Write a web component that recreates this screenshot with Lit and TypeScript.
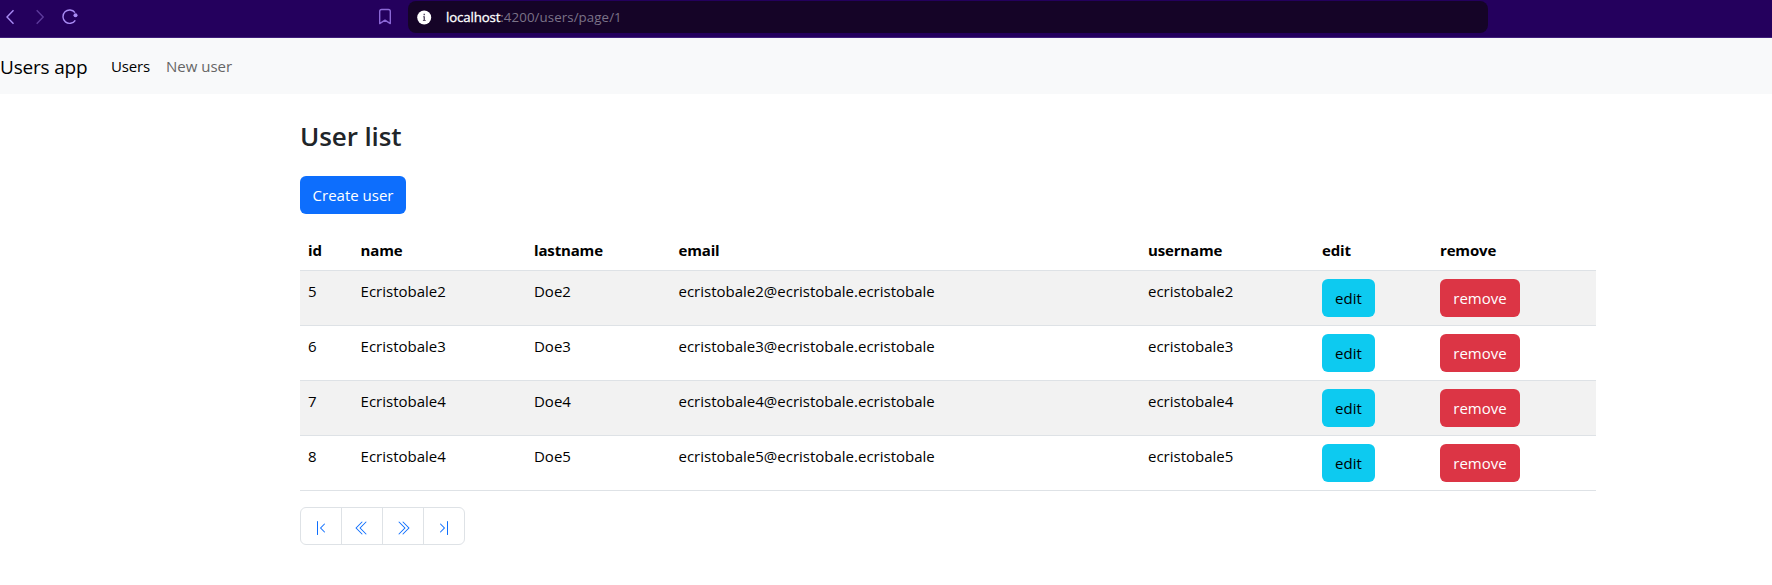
import { LitElement, html, css, svg } from "lit";
import { customElement, state } from "lit/decorators.js";

interface User {
  id: number;
  name: string;
  lastname: string;
  email: string;
  username: string;
}

@customElement("browser-bar")
class BrowserBar extends LitElement {
  static styles = css`
    :host {
      display: flex;
      box-sizing: border-box;
      height: 38px;
      background: #24005d;
      border-bottom: 1px solid #3f1f7a;
      font-family: "Segoe UI", "Open Sans", "Noto Sans", sans-serif;
    }
    .controls {
      display: flex;
      width: 408px;
      height: 33px;
    }
    .address {
      display: flex;
      align-items: center;
      box-sizing: border-box;
      width: 1080px;
      height: 32px;
      margin-top: 1px;
      padding-left: 9px;
      border-radius: 8px;
      background: #150427;
      color: #7b7388;
      font-size: 13.3px;
      line-height: 20px;
    }
    .address svg {
      margin-right: 14px;
    }
    .host {
      color: #fff;
      letter-spacing: -0.16px;
      -webkit-text-stroke: 0.3px #fff;
    }
    .path {
      letter-spacing: 0.08px;
    }
  `;
  render() {
    return html`
      <svg class="controls" width="408" height="33" viewBox="0 0 408 33" fill="none" stroke="#a98bf5" stroke-width="1.4">
        <path d="M13.5 10.3 7 17l6.500 6.700" />
        <path d="M36.700 10.300 43.200 17l-6.500 6.700" stroke="#5d3a9c" />
        <path d="M75.300 20.300A6.700 6.700 0 1 1 75 12.600" />
        <circle cx="75.500" cy="15.300" r="2" fill="#a98bf5" stroke="none" />
        <path d="M379.700 23.600V11.500a2 2 0 0 1 2-2h6.600a2 2 0 0 1 2 2v12.100l-5.300-3.500z" stroke="#8b68d6" stroke-linejoin="round" />
      </svg>
      <div class="address">
        <svg width="15" height="15" viewBox="0 0 15 15">
          <circle cx="7.200" cy="7.500" r="7" fill="#fff" />
          <path d="M6.500 3.700h1.500v1.500h-1.500zM6 6.300h2v3.700h.7v1H5.900v-1h.7V7.300H6z" fill="#5b5168" />
        </svg>
        <span class="host">localhost</span><span class="path">:4200/users/page/1</span>
      </div>
    `;
  }
}

const PAGE_ICONS = [
  {
    label: "First",
    shape: svg`<path d="M11.854 3.646a.5.5 0 0 1 0 .708L8.207 8l3.647 3.646a.5.5 0 0 1-.708.708l-4-4a.5.5 0 0 1 0-.708l4-4a.5.5 0 0 1 .708 0M4.500 1a.5.5 0 0 0-.5.5v13a.5.5 0 0 0 1 0v-13a.5.5 0 0 0-.5-.5"/>`,
  },
  {
    label: "Previous",
    shape: svg`<path d="M8.354 1.646a.5.5 0 0 1 0 .708L2.707 8l5.647 5.646a.5.5 0 0 1-.708.708l-6-6a.5.5 0 0 1 0-.708l6-6a.5.5 0 0 1 .708 0"/><path d="M12.354 1.646a.5.5 0 0 1 0 .708L6.707 8l5.647 5.646a.5.5 0 0 1-.708.708l-6-6a.5.5 0 0 1 0-.708l6-6a.5.5 0 0 1 .708 0"/>`,
  },
  {
    label: "Next",
    shape: svg`<path d="M3.646 1.646a.5.5 0 0 1 .708 0l6 6a.5.5 0 0 1 0 .708l-6 6a.5.5 0 0 1-.708-.708L9.293 8 3.646 2.354a.5.5 0 0 1 0-.708"/><path d="M7.646 1.646a.5.5 0 0 1 .708 0l6 6a.5.5 0 0 1 0 .708l-6 6a.5.5 0 0 1-.708-.708L13.293 8 7.646 2.354a.5.5 0 0 1 0-.708"/>`,
  },
  {
    label: "Last",
    shape: svg`<path d="M4.146 3.646a.5.5 0 0 0 0 .708L7.793 8l-3.647 3.646a.5.5 0 0 0 .708.708l4-4a.5.5 0 0 0 0-.708l-4-4a.5.5 0 0 0-.708 0M11.500 1a.5.5 0 0 1 .5.5v13a.5.5 0 0 1-1 0v-13a.5.5 0 0 1 .5-.5"/>`,
  },
];

@customElement("app-root")
class AppRoot extends LitElement {
  static styles = css`
    :host {
      display: block;
      height: 585px;
      background: #fff;
      color: #000;
      font-family: "Segoe UI", "Open Sans", "Noto Sans", sans-serif;
      font-size: 15px;
      line-height: 24px;
    }
    .navbar {
      display: flex;
      align-items: center;
      height: 56px;
      background: #f8f9fa;
      white-space: nowrap;
    }
    .brand {
      box-sizing: border-box;
      width: 111px;
      padding-top: 2px;
      font-size: 19px;
      letter-spacing: -0.2px;
      line-height: 30px;
    }
    .nav-link {
      width: 55px;
      letter-spacing: -0.15px;
    }
    .muted {
      color: #666;
      width: auto;
      letter-spacing: 0;
    }
    .container {
      width: 1296px;
      margin: 0 auto 0 300px;
      padding-top: 25px;
    }
    h3 {
      margin: 0 0 23px;
      color: #212529;
      font-size: 26px;
      font-weight: 600;
      letter-spacing: -0.1px;
      line-height: 34px;
    }
    .btn {
      display: flex;
      align-items: center;
      justify-content: center;
      box-sizing: border-box;
      height: 38px;
      padding: 0;
      border: 0;
      border-radius: 6px;
      font: inherit;
      white-space: nowrap;
    }
    .primary {
      width: 106px;
      background: #0d6efd;
      color: #fff;
    }
    .info {
      width: 53px;
      background: #0dcaf0;
      color: #000;
    }
    .danger {
      width: 80px;
      background: #dc3545;
      color: #fff;
    }
    table {
      width: 1296px;
      margin: 16px 0;
      border-collapse: separate;
      border-spacing: 0;
      table-layout: fixed;
    }
    th,
    td {
      box-sizing: border-box;
      padding: 8px;
      border-bottom: 1px solid #dee2e6;
      text-align: left;
      vertical-align: top;
    }
    th {
      font-weight: 700;
      letter-spacing: -0.15px;
    }
    tbody tr:nth-child(odd) td {
      background: #f2f2f2;
    }
    .c-id { width: 52.600px; }
    .c-name { width: 173.400px; }
    .c-last { width: 144.500px; }
    .c-mail { width: 469.500px; }
    .c-user { width: 174px; }
    .c-edit { width: 118px; }
    .c-remove { width: 164px; }
    .pagination {
      display: flex;
      margin: 0;
      padding: 0;
      list-style: none;
    }
    .page {
      display: flex;
      box-sizing: border-box;
      width: 42px;
      height: 38px;
      padding: 12px 12px 0;
      border: 1px solid #dee2e6;
      color: #0d6efd;
    }
    .page + .page {
      margin-left: -1px;
    }
    .page:first-child {
      border-radius: 6px 0 0 6px;
    }
    .page:last-child {
      border-radius: 0 6px 6px 0;
    }
  `;

  @state() private users: User[] = [
    [5, "Ecristobale2", "Doe2", "ecristobale2"] as const,
    [6, "Ecristobale3", "Doe3", "ecristobale3"] as const,
    [7, "Ecristobale4", "Doe4", "ecristobale4"] as const,
    [8, "Ecristobale4", "Doe5", "ecristobale5"] as const,
  ].map(([id, name, lastname, username]) => ({
    id,
    name,
    lastname,
    username,
    email: `${username}@ecristobale.ecristobale`,
  }));

  render() {
    return html`
      <browser-bar></browser-bar>
      <nav class="navbar">
        <span class="brand">Users app</span>
        <span class="nav-link">Users</span>
        <span class="nav-link muted">New user</span>
      </nav>
      <main class="container">
        <h3>User list</h3>
        <button class="btn primary">Create user</button>
        <table>
          <thead>
            <tr>
              <th class="c-id">id</th>
              <th class="c-name">name</th>
              <th class="c-last">lastname</th>
              <th class="c-mail">email</th>
              <th class="c-user">username</th>
              <th class="c-edit">edit</th>
              <th class="c-remove">remove</th>
            </tr>
          </thead>
          <tbody>
            ${this.users.map(
              (u) => html`<tr>
                <td>${u.id}</td>
                <td>${u.name}</td>
                <td>${u.lastname}</td>
                <td>${u.email}</td>
                <td>${u.username}</td>
                <td><button class="btn info">edit</button></td>
                <td><button class="btn danger">remove</button></td>
              </tr>`
            )}
          </tbody>
        </table>
        <ul class="pagination">
          ${PAGE_ICONS.map(
            (p) => html`<li class="page">
              <svg width="16" height="16" viewBox="0 0 16 16" fill="currentColor" aria-label=${p.label}>${p.shape}</svg>
            </li>`
          )}
        </ul>
      </main>
    `;
  }
}
